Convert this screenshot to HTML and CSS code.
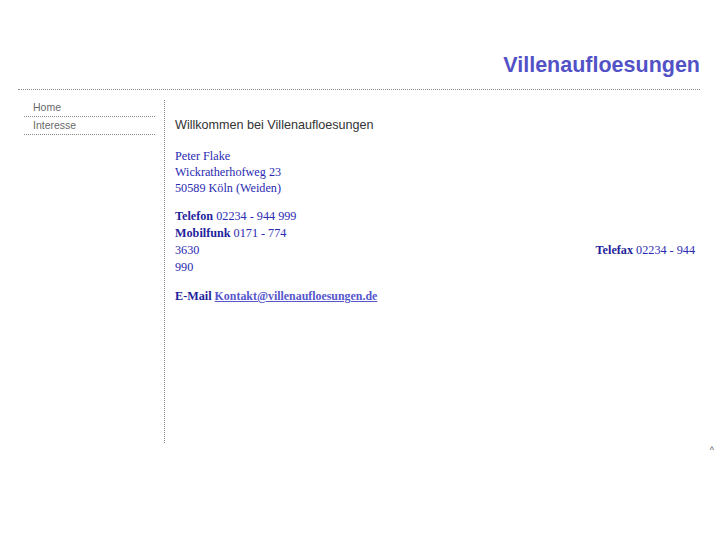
FILE: index.html
```html
<!DOCTYPE html>
<html lang="de">
<head>
<meta charset="utf-8">
<title>Villenaufloesungen</title>
<link rel="stylesheet" href="styles.css">
</head>
<body>
<div class="wrap">
  <header class="header">
    <h1 class="title">Villenaufloesungen</h1>
  </header>
  <div class="main">
    <nav class="side">
      <a class="nav-item" href="#">Home</a>
      <a class="nav-item" href="#">Interesse</a>
    </nav>
    <section class="content">
      <h2 class="welcome">Willkommen bei Villenaufloesungen</h2>
      <div class="address">
        <div>Peter Flake</div>
        <div>Wickratherhofweg 23</div>
        <div>50589 Köln (Weiden)</div>
      </div>
      <div class="contact">
        <div><b>Telefon</b> 02234 - 944 999</div>
        <div><b>Mobilfunk</b> 0171 - 774</div>
        <div class="split"><span>3630</span><span><b>Telefax</b> 02234 - 944</span></div>
        <div>990</div>
      </div>
      <div class="mail"><b>E-Mail</b> <a href="#">Kontakt@villenaufloesungen.de</a></div>
    </section>
  </div>
</div>
<div class="footer"><a href="#" class="top">^</a></div>
</body>
</html>
```

FILE: styles.css
```css
html, body {
  margin: 0;
  padding: 0;
  background: #fff;
}
body {
  font-family: "Liberation Sans", Arial, sans-serif;
}
.wrap {
  margin: 0 27px 0 18px;
}
.header {
  padding-top: 52px;
  box-sizing: border-box;
  border-bottom: 1px dotted #8a8a8a;
  height: 90px;
  text-align: right;
}
.title {
  margin: 0;
  font-size: 21.5px;
  line-height: 26px;
  font-weight: bold;
  color: #5252c6;
}
.main {
  display: flex;
  align-items: flex-start;
  margin-top: 9px;
}
.side {
  width: 146px;
  box-sizing: border-box;
  padding: 0 9px 0 6px;
  display: flex;
  flex-direction: column;
}
.nav-item {
  display: block;
  padding: 2px 0 2px 9px;
  line-height: 13px;
  font-size: 10.5px;
  color: #6a6a6a;
  text-decoration: none;
  border-bottom: 1px dotted #8a8a8a;
}
.content {
  flex: 1;
  margin-top: 1px;
  height: 343px;
  box-sizing: border-box;
  border-left: 1px dotted #8a8a8a;
  padding: 18px 5px 0 10px;
  font-family: "Liberation Serif", "Times New Roman", serif;
  font-size: 12.2px;
  color: #2a2ab2;
}
.welcome {
  margin: 0;
  font-family: "Liberation Sans", Arial, sans-serif;
  font-weight: normal;
  font-size: 12.6px;
  line-height: 15px;
  color: #333;
}
.address {
  margin-top: 15px;
  line-height: 16px;
}
.contact {
  margin-top: 12px;
  line-height: 17px;
}
.contact b, .mail b {
  color: #1f1f9c;
}
.split {
  display: flex;
  justify-content: space-between;
}
.mail {
  margin-top: 12px;
  line-height: 17px;
}
.mail a {
  font-size: 11.9px;
  color: #5757cc;
  font-weight: bold;
  text-decoration: underline;
}
.footer {
  text-align: right;
  padding-right: 13px;
  line-height: 9px;
}
.top {
  font-size: 9px;
  color: #555;
  text-decoration: none;
}
```
